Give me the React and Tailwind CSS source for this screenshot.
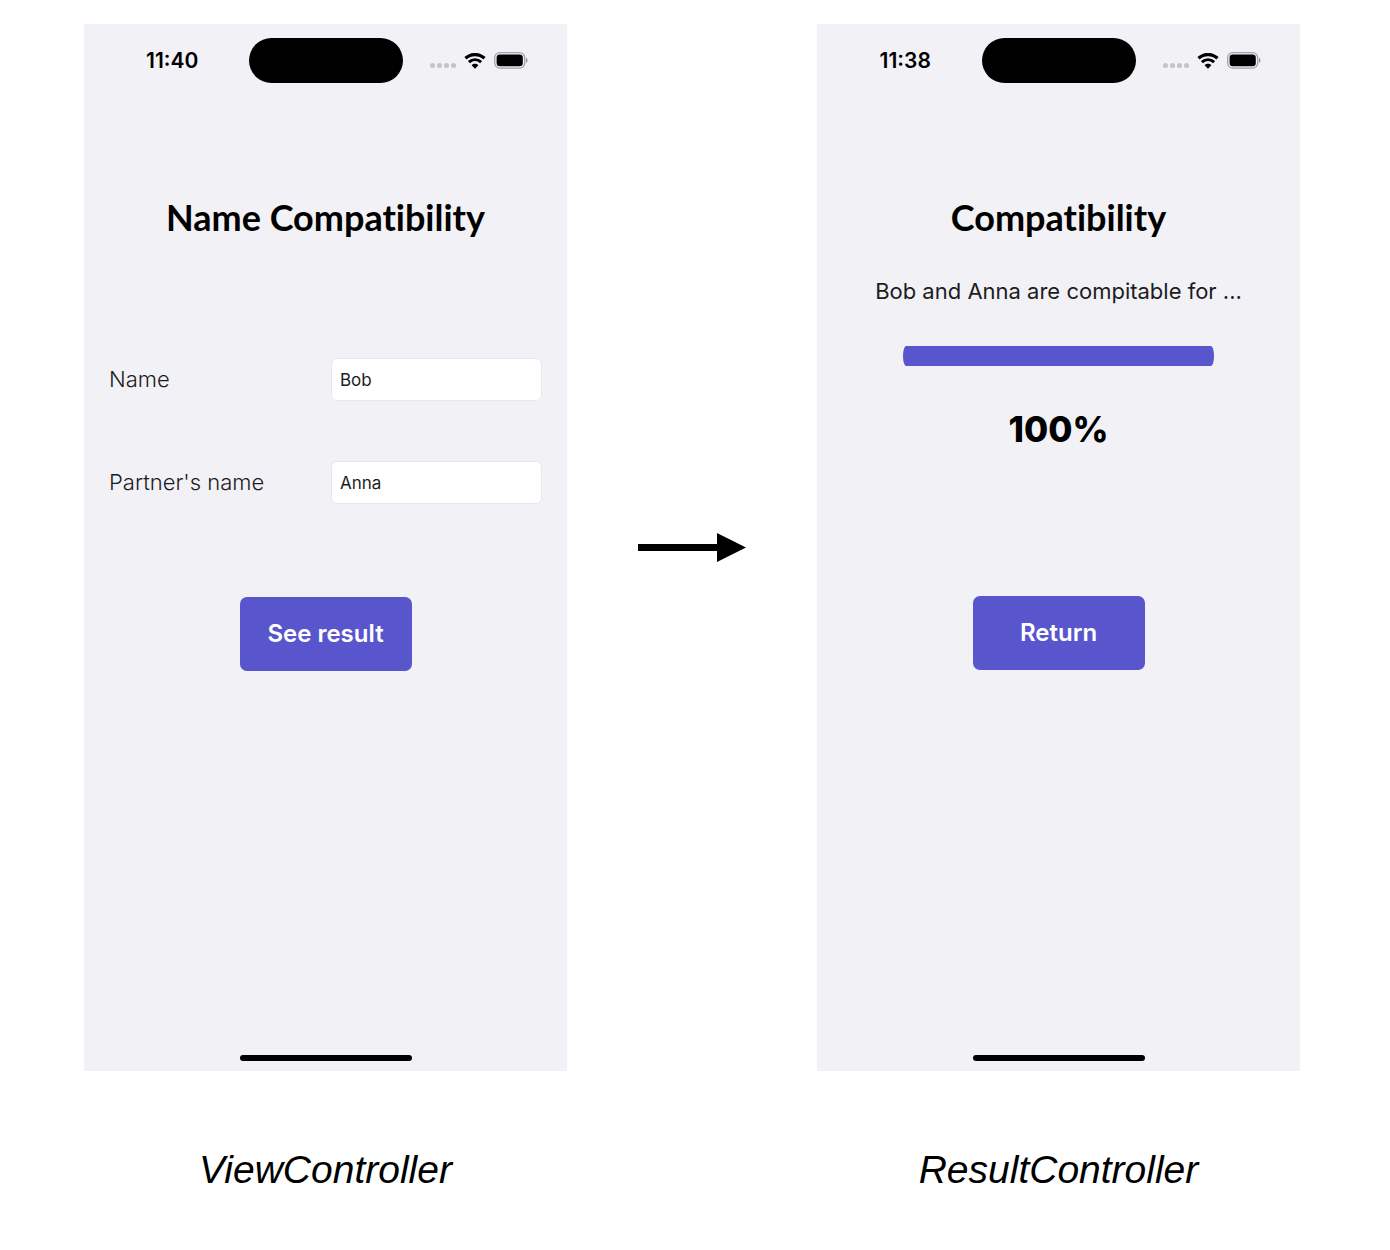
import React from "react";

function WifiIcon() {
  return (
    <svg width="22" height="16" viewBox="0 0 22 16" fill="none" stroke="black" aria-hidden="true">
      <path d="M1.5 5.3C7 .4 15 .4 20.5 5.3" strokeWidth="3.3" />
      <path d="M4.9 9.2C8.5 6 13.5 6 17.1 9.2" strokeWidth="3.1" />
      <path d="M7.6 12.2C9.5 10.4 12.5 10.4 14.4 12.2L11 15.7Z" fill="black" stroke="none" />
    </svg>
  );
}

function BatteryIcon() {
  return (
    <svg width="34" height="17" viewBox="0 0 34 17" aria-hidden="true">
      <rect x="0.7" y="0.7" width="30" height="15.4" rx="5" fill="none" stroke="#a3a2a6" strokeWidth="1.3" />
      <rect x="2.6" y="2.6" width="26.2" height="11.6" rx="3.2" fill="black" />
      <path d="M32 5.8C34 6.8 34 10 32 11Z" fill="#98979b" />
    </svg>
  );
}

function StatusBar({ time }) {
  return (
    <div className="grid grid-cols-[1fr_154px_1fr] pt-[14px]">
      <time className="flex h-[45px] items-center justify-center pl-3 text-[21px] font-semibold">{time}</time>
      <div className="h-[45px] rounded-full bg-black" />
      <div className="flex h-[45px] items-center pl-[27px]">
        <div className="mt-[10px] flex gap-[2px]">
          <span className="size-[5px] rounded-full bg-[#c4c3c8]" />
          <span className="size-[5px] rounded-full bg-[#c4c3c8]" />
          <span className="size-[5px] rounded-full bg-[#c4c3c8]" />
          <span className="size-[5px] rounded-full bg-[#c4c3c8]" />
        </div>
        <div className="ml-2 flex items-center gap-2">
          <WifiIcon />
          <BatteryIcon />
        </div>
      </div>
    </div>
  );
}

function Screen({ time, title, caption, children }) {
  return (
    <figure className="min-w-0">
      <section className="flex aspect-[483/1047] flex-col bg-[#f2f1f6]">
        <StatusBar time={time} />
        <h1 className="mt-[104px] text-center font-['Lato',sans-serif] text-[36px] leading-[60px] font-bold whitespace-nowrap [font-variant-ligatures:none]">{title}</h1>
        {children}
        <div className="mx-auto mt-auto mb-[10px] h-[6px] w-[172px] rounded-full bg-black" />
      </section>
      <figcaption className="mt-[74px] text-center font-['Liberation_Sans',sans-serif] text-[39px] leading-[50px] italic">{caption}</figcaption>
    </figure>
  );
}

function Field({ id, label, value }) {
  return (
    <div className="flex items-center justify-between">
      <label htmlFor={id} className="text-[22px] font-light text-[#1c1c1e]">{label}</label>
      <input
        id={id}
        type="text"
        defaultValue={value}
        className="h-[43px] w-[211px] rounded-md border border-[#e8e7eb] bg-white px-2 text-[17px] text-[#1c1c1e]"
      />
    </div>
  );
}

function ActionButton({ children }) {
  return (
    <button type="button" className="mx-auto block h-[74px] w-[172px] rounded-[7px] bg-[#5855cd] text-[24px] font-semibold text-white">
      {children}
    </button>
  );
}

export default function App() {
  return (
    <main className="grid min-h-screen grid-cols-[483fr_250fr_483fr] bg-white pt-6 pr-[90px] pb-10 pl-[84px] font-['Inter',sans-serif] text-black">
      <Screen time="11:40" title="Name Compatibility" caption="ViewController">
        <form className="mt-[111px]">
          <div className="flex flex-col gap-[60px] px-[25px]">
            <Field id="name" label="Name" value="Bob" />
            <Field id="partner" label="Partner's name" value="Anna" />
          </div>
          <div className="mt-[93px]">
            <ActionButton>See result</ActionButton>
          </div>
        </form>
      </Screen>
      <div className="flex justify-center pt-[508px]">
        <svg width="108" height="30" viewBox="0 0 108 30" role="img" aria-label="leads to">
          <path d="M0 12H79V1L108 15.5L79 30V19H0Z" fill="black" />
        </svg>
      </div>
      <Screen time="11:38" title="Compatibility" caption="ResultController">
        <p className="mt-[29px] text-center text-[22px] leading-[30px] whitespace-nowrap text-[#1c1c1e]">Bob and Anna are compitable for ...</p>
        <div role="progressbar" aria-label="Compatibility" aria-valuenow={100} className="mx-auto mt-10 h-[20px] w-[311px] rounded-[3px/10px] bg-[#5855cd]" />
        <p className="mt-[41px] text-center text-[35px] leading-[44px] font-extrabold">100%</p>
        <div className="mt-[145px]">
          <ActionButton>Return</ActionButton>
        </div>
      </Screen>
    </main>
  );
}
